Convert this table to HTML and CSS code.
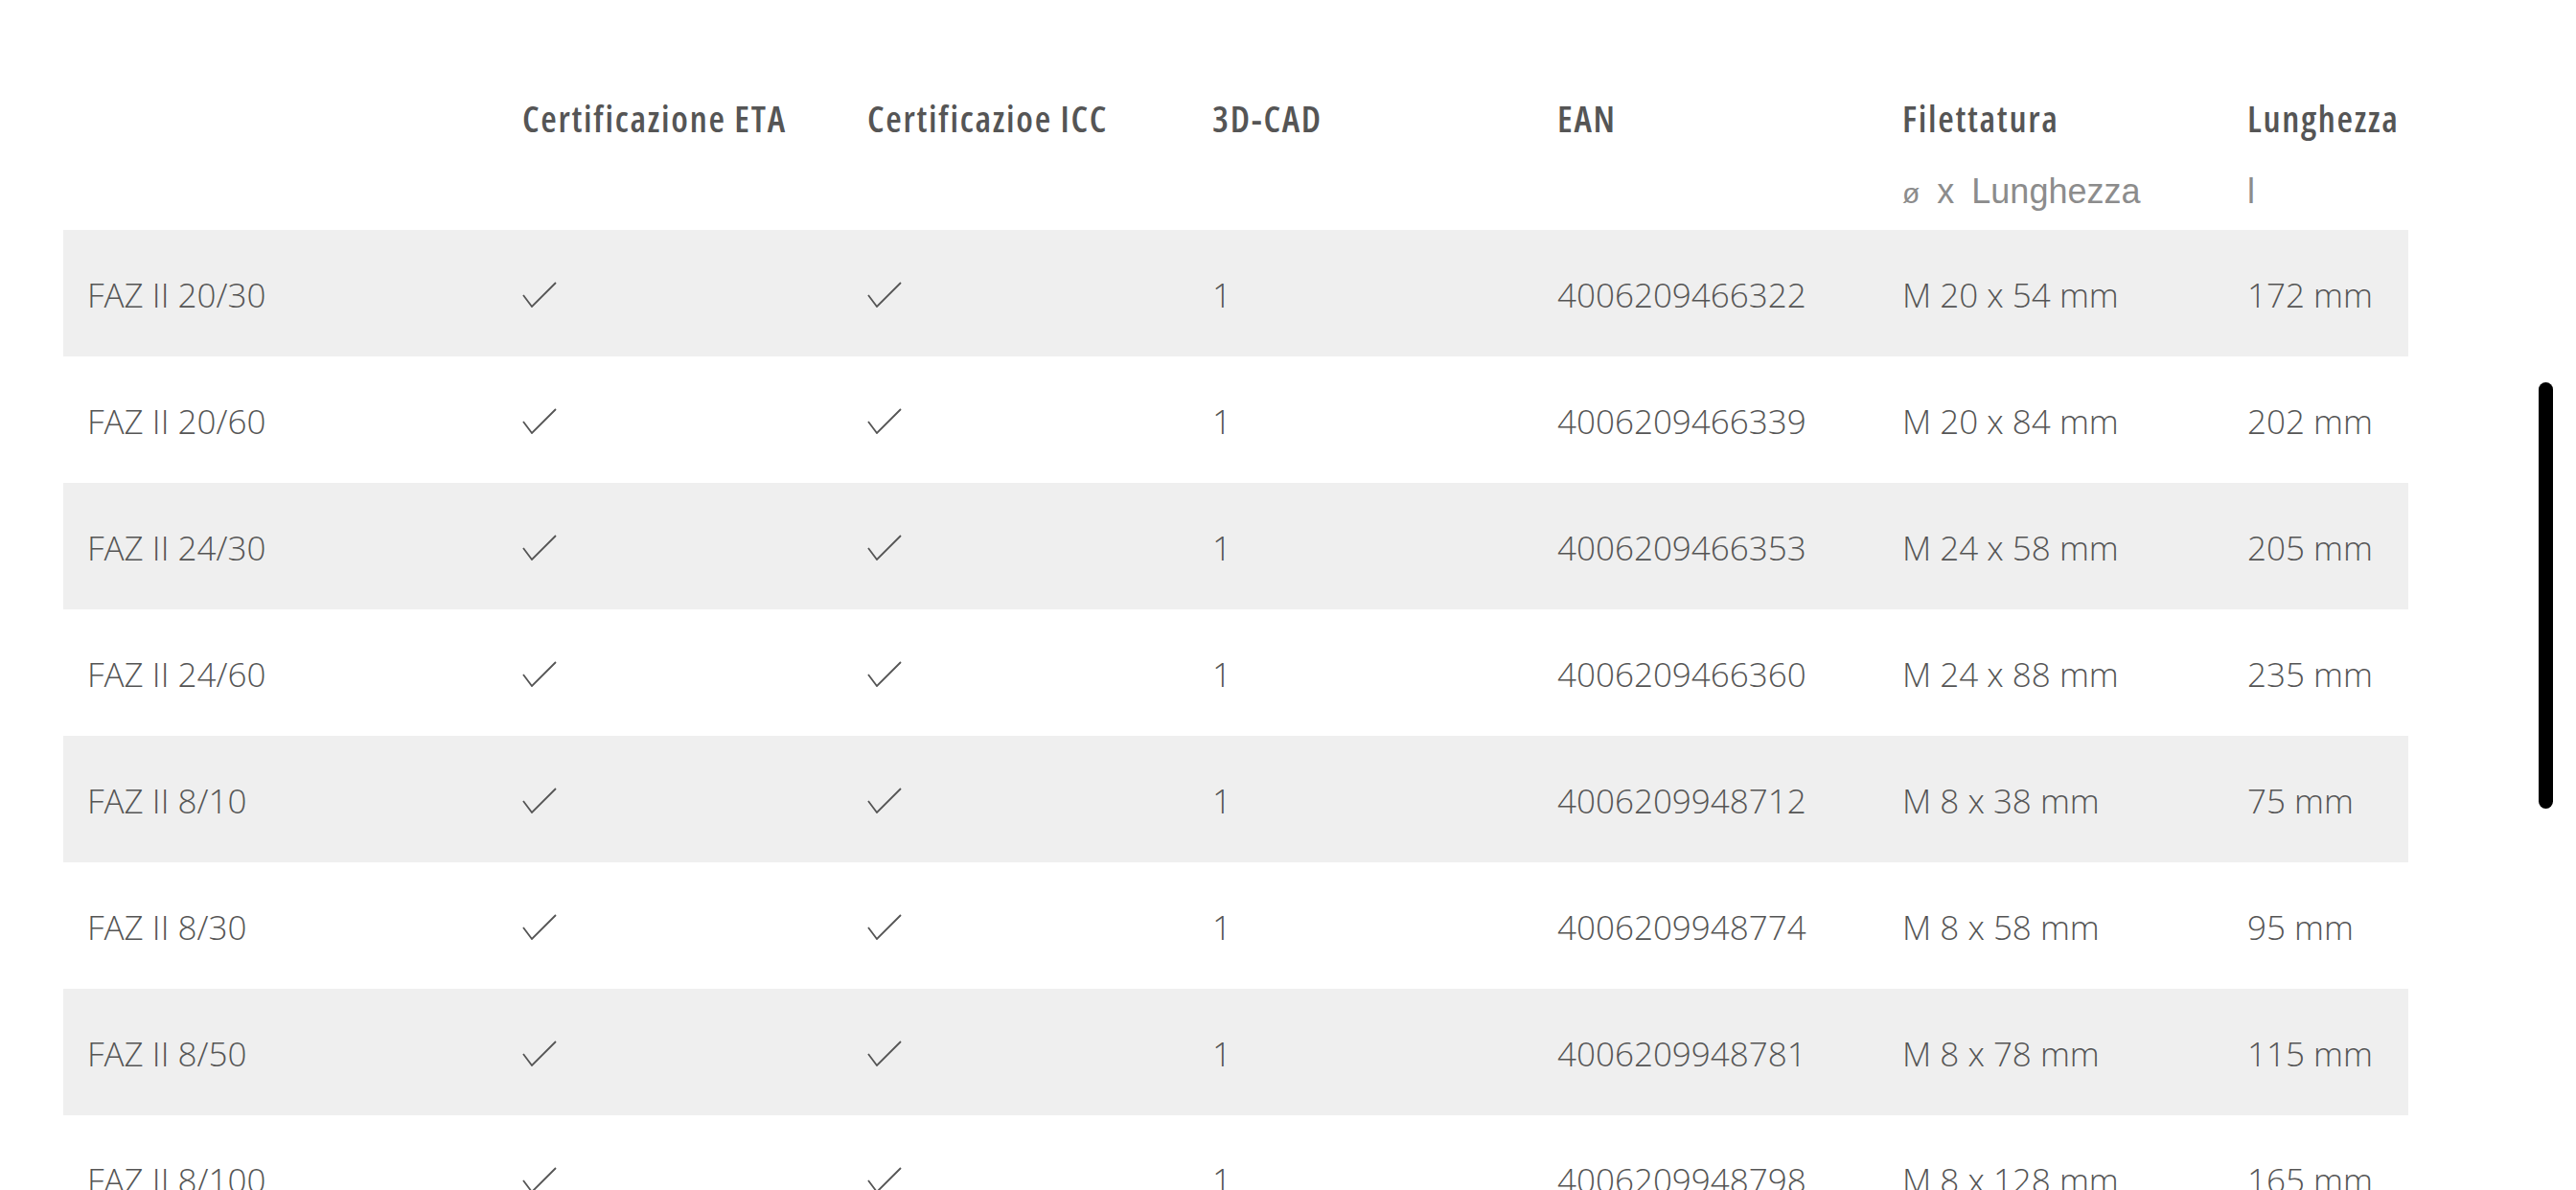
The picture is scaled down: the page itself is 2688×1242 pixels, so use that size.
FILE: index.html
```html
<!DOCTYPE html>
<html lang="it">
<head>
<meta charset="utf-8">
<link rel="stylesheet" href="styles.css">
</head>
<body>
<div class="page">
  <div class="table">
    <div class="head">
      <div class="hc"></div>
      <div class="hc"><div class="hl">Certificazione ETA</div></div>
      <div class="hc"><div class="hl">Certificazioe ICC</div></div>
      <div class="hc"><div class="hl">3D-CAD</div></div>
      <div class="hc"><div class="hl">EAN</div></div>
      <div class="hc"><div class="hl">Filettatura</div><div class="sub"><span class="dia">ø</span><span class="x">x</span>Lunghezza</div></div>
      <div class="hc"><div class="hl">Lunghezza</div><div class="sub">l</div></div>
    </div>
    <div class="row alt"><div class="c">FAZ II 20/30</div><div class="c"><svg class="chk" viewBox="0 0 36 27"><polyline points="1,14 10,26 35,1"/></svg></div><div class="c"><svg class="chk" viewBox="0 0 36 27"><polyline points="1,14 10,26 35,1"/></svg></div><div class="c">1</div><div class="c">4006209466322</div><div class="c">M 20 x 54 mm</div><div class="c">172 mm</div></div>
    <div class="row"><div class="c">FAZ II 20/60</div><div class="c"><svg class="chk" viewBox="0 0 36 27"><polyline points="1,14 10,26 35,1"/></svg></div><div class="c"><svg class="chk" viewBox="0 0 36 27"><polyline points="1,14 10,26 35,1"/></svg></div><div class="c">1</div><div class="c">4006209466339</div><div class="c">M 20 x 84 mm</div><div class="c">202 mm</div></div>
    <div class="row alt"><div class="c">FAZ II 24/30</div><div class="c"><svg class="chk" viewBox="0 0 36 27"><polyline points="1,14 10,26 35,1"/></svg></div><div class="c"><svg class="chk" viewBox="0 0 36 27"><polyline points="1,14 10,26 35,1"/></svg></div><div class="c">1</div><div class="c">4006209466353</div><div class="c">M 24 x 58 mm</div><div class="c">205 mm</div></div>
    <div class="row"><div class="c">FAZ II 24/60</div><div class="c"><svg class="chk" viewBox="0 0 36 27"><polyline points="1,14 10,26 35,1"/></svg></div><div class="c"><svg class="chk" viewBox="0 0 36 27"><polyline points="1,14 10,26 35,1"/></svg></div><div class="c">1</div><div class="c">4006209466360</div><div class="c">M 24 x 88 mm</div><div class="c">235 mm</div></div>
    <div class="row alt"><div class="c">FAZ II 8/10</div><div class="c"><svg class="chk" viewBox="0 0 36 27"><polyline points="1,14 10,26 35,1"/></svg></div><div class="c"><svg class="chk" viewBox="0 0 36 27"><polyline points="1,14 10,26 35,1"/></svg></div><div class="c">1</div><div class="c">4006209948712</div><div class="c">M 8 x 38 mm</div><div class="c">75 mm</div></div>
    <div class="row"><div class="c">FAZ II 8/30</div><div class="c"><svg class="chk" viewBox="0 0 36 27"><polyline points="1,14 10,26 35,1"/></svg></div><div class="c"><svg class="chk" viewBox="0 0 36 27"><polyline points="1,14 10,26 35,1"/></svg></div><div class="c">1</div><div class="c">4006209948774</div><div class="c">M 8 x 58 mm</div><div class="c">95 mm</div></div>
    <div class="row alt"><div class="c">FAZ II 8/50</div><div class="c"><svg class="chk" viewBox="0 0 36 27"><polyline points="1,14 10,26 35,1"/></svg></div><div class="c"><svg class="chk" viewBox="0 0 36 27"><polyline points="1,14 10,26 35,1"/></svg></div><div class="c">1</div><div class="c">4006209948781</div><div class="c">M 8 x 78 mm</div><div class="c">115 mm</div></div>
    <div class="row"><div class="c">FAZ II 8/100</div><div class="c"><svg class="chk" viewBox="0 0 36 27"><polyline points="1,14 10,26 35,1"/></svg></div><div class="c"><svg class="chk" viewBox="0 0 36 27"><polyline points="1,14 10,26 35,1"/></svg></div><div class="c">1</div><div class="c">4006209948798</div><div class="c">M 8 x 128 mm</div><div class="c">165 mm</div></div>
  </div>
</div>
<div class="scrollbar"></div>
</body>
</html>
```
FILE: styles.css
```css
html, body {
  margin: 0;
  padding: 0;
  background: #fff;
  overflow: hidden;
}
body {
  font-family: "Open Sans", "Liberation Sans", sans-serif;
  color: #595959;
}
.page {
  padding-left: 66px;
}
.table {
  width: 2447px;
}
.head, .row {
  display: grid;
  grid-template-columns: 454px 360px 360px 360px 360px 360px 193px;
}
.head {
  padding-top: 98px;
  height: 142px;
}
.hc {
  padding-left: 25px;
}
.hl {
  font-weight: 600;
  font-stretch: 75%;
  font-size: 38px;
  letter-spacing: 1.7px;
  line-height: 50px;
  color: #555;
  white-space: nowrap;
}
.sub {
  margin-top: 27px;
  font-family: "Liberation Sans", Arial, sans-serif;
  font-size: 36px;
  line-height: 50px;
  color: #8c8c8c;
  white-space: nowrap;
}
.dia {
  font-size: 30px;
  margin-right: 18px;
}
.x {
  margin-right: 18px;
}
.row {
  height: 132px;
  align-items: center;
}
.row.alt {
  background: #efefef;
}
.c {
  padding-left: 25px;
  padding-top: 3px;
  font-weight: 300;
  font-stretch: 88%;
  font-size: 35px;
  line-height: 50px;
  color: #555;
  white-space: nowrap;
  display: flex;
  align-items: center;
}
.chk {
  width: 36px;
  height: 27px;
  fill: none;
  stroke: #555;
  stroke-width: 1.8;
  stroke-linejoin: miter;
}
.scrollbar {
  position: fixed;
  left: 2649px;
  top: 399px;
  width: 15px;
  height: 445px;
  border-radius: 8px;
  background: #000;
}
```
